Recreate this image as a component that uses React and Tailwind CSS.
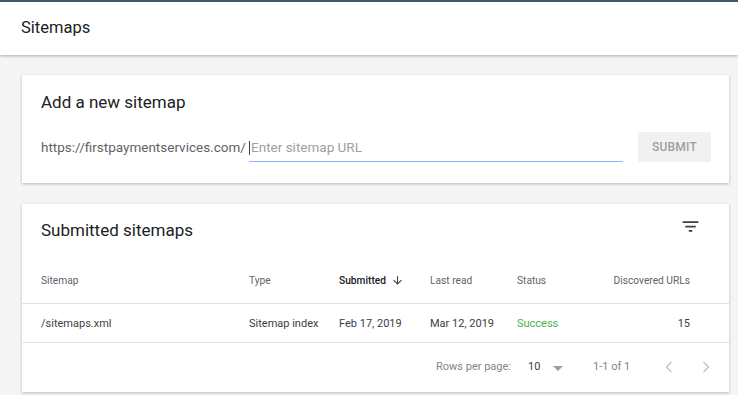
import React from 'react';

const FilterIcon = () => (
  <svg width="21" height="21" viewBox="0 0 24 24" fill="#3c4043" className="mb-[9px]">
    <path d="M10 18h4v-2h-4v2zM3 6v2h18V6H3zm3 7h12v-2H6v2z" />
  </svg>
);

const ArrowDown = () => (
  <svg width="13" height="13" viewBox="0 0 24 24" fill="#3c4043">
    <path d="M20 12l-1.41-1.41L13 16.17V4h-2v12.17l-5.58-5.59L4 12l8 8 8-8z" />
  </svg>
);

const App = () => {
  return (
    <div className="w-[738px] h-[395px] overflow-hidden bg-[#f5f5f5] font-['Roboto',sans-serif] text-[#202124]">
      {/* Top strip + header */}
      <div className="h-[2px] bg-[#4a5a66]" />
      <div className="h-[53px] bg-white flex items-center pl-[21px] shadow-[0_1px_3px_rgba(0,0,0,0.3)] relative">
        <span className="text-[16.5px]">Sitemaps</span>
      </div>

      <div className="px-[22px] pt-[20px] pr-[9px]">
        {/* Add a new sitemap */}
        <div className="bg-white h-[108px] shadow-[0_1px_3px_rgba(0,0,0,0.25)] pl-[19px] pt-[16px]">
          <div className="text-[17px] leading-[22px]">Add a new sitemap</div>
          <div className="flex items-center mt-[19px]">
            <span className="text-[13.5px] text-[#5f6368] w-[208px]">https://firstpaymentservices.com/</span>
            <div className="w-[374px] h-[30px] flex items-center border-b border-[#8ab4f8] relative pt-[2px]">
              <span className="w-px h-[14px] bg-[#3c4043] mr-[1px]" />
              <span className="text-[13.5px] text-[#9aa0a6]">Enter sitemap URL</span>
            </div>
            <button className="ml-[15px] w-[73px] h-[30px] bg-[#f1f1f1] rounded-[2px] text-[12px] text-[#9e9e9e] font-medium tracking-[0.2px]">
              SUBMIT
            </button>
          </div>
        </div>

        {/* Submitted sitemaps */}
        <div className="bg-white mt-[21px] h-[188px] shadow-[0_1px_3px_rgba(0,0,0,0.25)]">
          <div className="flex items-center justify-between pl-[19px] pr-[28px] h-[54px]">
            <span className="text-[17px]">Submitted sitemaps</span>
            <FilterIcon />
          </div>
          <div className="flex items-center h-[46px] pl-[19px] pr-[39px] text-[10.2px] text-[#5f6368] border-b border-[#e0e0e0] pt-[1px]">
            <span className="w-[208px]">Sitemap</span>
            <span className="w-[90px]">Type</span>
            <span className="w-[91px] flex items-center gap-[5px] text-[#202124] font-medium">
              Submitted <ArrowDown />
            </span>
            <span className="w-[87px]">Last read</span>
            <span className="w-[60px]">Status</span>
            <span className="flex-1 text-right">Discovered URLs</span>
          </div>
          <div className="flex items-center h-[39px] pl-[19px] pr-[39px] text-[11px] text-[#3c4043] border-b border-[#e0e0e0] pt-[2px]">
            <span className="w-[208px]">/sitemaps.xml</span>
            <span className="w-[90px]">Sitemap index</span>
            <span className="w-[91px]">Feb 17, 2019</span>
            <span className="w-[87px]">Mar 12, 2019</span>
            <span className="w-[60px] text-[#4caf50]">Success</span>
            <span className="flex-1 text-right">15</span>
          </div>
          <div className="flex items-center h-[48px] pl-[414px] text-[11px] text-[#80868b] pt-[1px]">
            <span className="w-[92px]">Rows per page:</span>
            <span className="text-[#3c4043] w-[25px]">10</span>
            <svg width="10" height="5" viewBox="0 0 10 5" className="mt-[2px]">
              <path d="M0 0h10L5 5z" fill="#9aa0a6" />
            </svg>
            <span className="ml-[30px] w-[72px]">1-1 of 1</span>
            <svg width="8" height="12" viewBox="0 0 8 12" className="mb-[2px]">
              <path d="M6.5 1L1.5 6l5 5" stroke="#bdc1c6" strokeWidth="1.3" fill="none" />
            </svg>
            <svg width="8" height="12" viewBox="0 0 8 12" className="ml-[29px] mb-[2px]">
              <path d="M1.5 1l5 5-5 5" stroke="#bdc1c6" strokeWidth="1.3" fill="none" />
            </svg>
          </div>
        </div>
      </div>
    </div>
  );
};

export default App;
